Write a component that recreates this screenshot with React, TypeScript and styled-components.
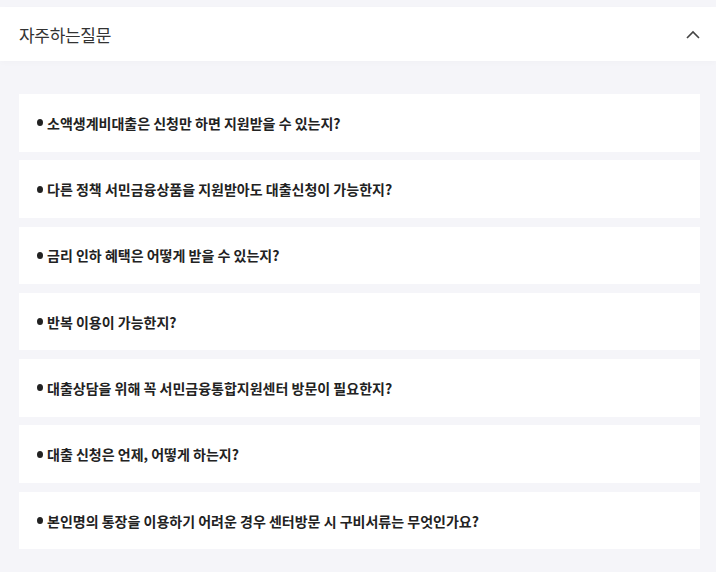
import React from "react";
import styled, { createGlobalStyle } from "styled-components";

const Global = createGlobalStyle`
  html, body { margin: 0; padding: 0; background: #f5f5f9; }
  body { font-family: "Noto Sans CJK KR", "Noto Sans", sans-serif; }
`;

const Page = styled.div`
  width: 716px;
  min-height: 572px;
  background: #f5f5f9;
  padding-top: 7px;
  box-sizing: border-box;
`;

const Header = styled.div`
  height: 54px;
  background: #fff;
  display: flex;
  align-items: center;
  justify-content: space-between;
  padding: 0 16px 0 19px;
  box-shadow: 0 2px 6px rgba(0, 0, 0, 0.02);
`;

const Title = styled.h2`
  margin: 0;
  font-size: 17px;
  font-weight: 400;
  color: #333;
  letter-spacing: -0.3px;
`;

const ToggleButton = styled.button`
  border: 0;
  background: transparent;
  padding: 0;
  width: 14px;
  height: 18px;
  display: flex;
  align-items: center;
  justify-content: center;
`;

const List = styled.ul`
  list-style: none;
  margin: 0;
  padding: 33px 16px 24px 19px;
  display: flex;
  flex-direction: column;
  gap: 8.8px;
`;

const Item = styled.li`
  background: #fff;
  height: 57.5px;
  display: flex;
  align-items: center;
  padding-left: 18px;
  font-size: 14px;
  font-weight: 700;
  color: #222;
`;

const Bullet = styled.span`
  display: inline-block;
  width: 6px;
  height: 7px;
  border-radius: 50%;
  background: #222;
  margin-right: 4px;
`;

const questions = [
  "소액생계비대출은 신청만 하면 지원받을 수 있는지?",
  "다른 정책 서민금융상품을 지원받아도 대출신청이 가능한지?",
  "금리 인하 혜택은 어떻게 받을 수 있는지?",
  "반복 이용이 가능한지?",
  "대출상담을 위해 꼭 서민금융통합지원센터 방문이 필요한지?",
  "대출 신청은 언제, 어떻게 하는지?",
  "본인명의 통장을 이용하기 어려운 경우 센터방문 시 구비서류는 무엇인가요?",
];

export default function App() {
  return (
    <Page>
      <Global />
      <Header>
        <Title>자주하는질문</Title>
        <ToggleButton aria-label="접기">
          <svg width="14" height="9" viewBox="0 0 14 9" fill="none">
            <path d="M1 8L7 2l6 6" stroke="#444" strokeWidth="1.6" />
          </svg>
        </ToggleButton>
      </Header>
      <List>
        {questions.map((q) => (
          <Item key={q}>
            <Bullet />
            {q}
          </Item>
        ))}
      </List>
    </Page>
  );
}
